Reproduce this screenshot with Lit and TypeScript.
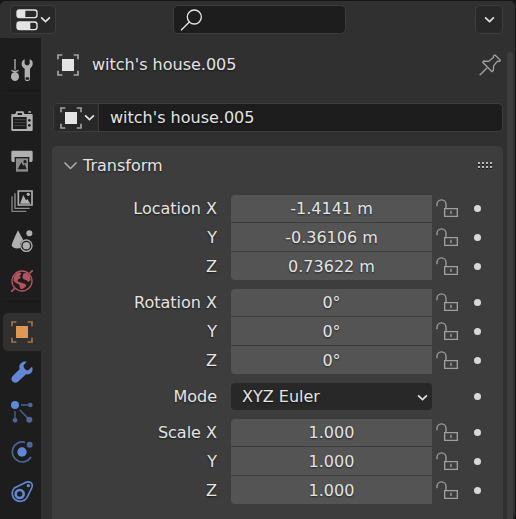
import { LitElement, html, svg, css, nothing } from "lit";
import { customElement } from "lit/decorators.js";
import { classMap } from "lit/directives/class-map.js";

const brackets = svg`<path d="M3 16V3H16 M50 3H63V16 M63 50V63H50 M16 63H3V50" fill="none" stroke="currentColor" stroke-width="5" opacity=".65"/><path d="M15 15H51V51H15Z"/>`;

const wrench = svg`<path d="M63 17C69 30 59 42 45 40L21 62C15 67 8 66 4 61S1 49 5 45L26 24C21 9 35 0 47 2L38 13C36 21 45 30 52 28Z"/>`;

const icons = {
  object: brackets,
  tools: svg`<path d="M10 0H14V32H10Z M1 32Q12 38 23 32V36Q12 44 1 36Z M12 40C21 40 24 47 24 54S18 66 12 66S0 61 0 54S3 40 12 40Z"/><path fill-rule="evenodd" d="M41 1V14L45 19H52L56 14V1C63 3 66 9 65 15C65 22 60 26 57 29V59C57 63 53 66 49 66S41 63 41 59V29C35 26 32 21 32 15C32 8 35 3 41 1Z M49 55A4 4 0 1 0 49 62A4 4 0 1 0 49 55Z"/>`,
  render: svg`<path d="M52 4H60V8H52Z M1 13L13 12L16 4H37L40 12H62Q65 12 65 15V60Q65 63 62 63H4Q1 63 1 60Z"/><path class="ink" d="M20 9H33V15H20Z M6 21H47V57H6Z"/><circle class="ink" cx="55" cy="31" r="4"/><circle class="ink" cx="55" cy="46" r="4"/><path d="M10 29H43M10 38H43M10 47H43" stroke="currentColor" stroke-width="3" opacity=".3"/>`,
  output: svg`<path d="M5 2H61Q65 2 65 6V31Q65 36 60 36H55V21H11V36H6Q1 36 1 31V6Q1 2 5 2Z"/><path d="M15 25H51V65H15Z" opacity=".75"/><path class="ink" d="M20 58L31 37L37 47L41 43L47 58Z"/><circle class="ink" cx="42" cy="35" r="5"/>`,
  viewLayer: svg`<path d="M22 3H63V45H22Z" fill="none" stroke="currentColor" stroke-width="5"/><path d="M27 41L37 15L45 31L49 27L58 41Z"/><circle cx="52" cy="13" r="5"/><path d="M12 10V55H56" fill="none" stroke="currentColor" stroke-width="4" opacity=".8"/><path d="M3 19V64H46" fill="none" stroke="currentColor" stroke-width="4" opacity=".7"/>`,
  scene: svg`<path d="M21 1L37 31C28 35 25 44 28 54C15 58 3 53 2 46C2 42 16 10 21 1Z"/><circle cx="55" cy="10" r="9"/><circle cx="46" cy="47" r="17" fill="none" stroke="currentColor" stroke-width="4"/><circle cx="46" cy="47" r="11"/>`,
  world: svg`<circle cx="33" cy="33" r="30" fill="none" stroke="currentColor" stroke-width="4"/><path d="M0 66L11 55M55 11L66 0" stroke="currentColor" stroke-width="5"/><path d="M8 23Q14 9 27 7L31 12L25 18L30 23L22 28L19 34L27 37L43 42L46 48L34 58L27 55L25 44L14 38L8 33Z M38 10L48 9L57 19L59 31L52 35L45 30L38 28L34 21Z"/>`,
  modifiers: wrench,
  particles: svg`<g stroke="currentColor" stroke-width="4" opacity=".65"><path d="M30 12H52M12 30V52M26 26L50 51" fill="none"/></g><circle cx="12" cy="12" r="12"/><g opacity=".7"><circle cx="58" cy="12" r="7"/><circle cx="12" cy="58" r="7"/><circle cx="55" cy="56" r="9"/></g>`,
  physics: svg`<circle cx="33" cy="33" r="14"/><g opacity=".7"><path d="M42 4A30 30 0 1 0 60 48" fill="none" stroke="currentColor" stroke-width="5"/><circle cx="56" cy="11" r="9"/></g>`,
  constraints: svg`<path d="M10 21L45 4Q55 0 61 6Q66 12 62 21L48 50A24 24 0 1 1 10 21Z" fill="none" stroke="currentColor" stroke-width="5"/><circle cx="26" cy="39" r="12" fill="none" stroke="currentColor" stroke-width="8"/><circle cx="52" cy="14" r="5"/>`,
  toggles: svg`<path fill-rule="evenodd" d="M10 1H56Q65 1 65 10V19Q65 28 56 28H10Q1 28 1 19V10Q1 1 10 1Z M28 5V24H55Q61 24 61 18V11Q61 5 55 5Z"/><path fill-rule="evenodd" d="M10 37H56Q65 37 65 46V55Q65 64 56 64H10Q1 64 1 55V46Q1 37 10 37Z M43 41V60H55Q61 60 61 54V47Q61 41 55 41Z"/>`,
  search: svg`<g fill="none" stroke="currentColor" stroke-width="4"><circle cx="43" cy="24" r="21"/><path d="M28 39L3 64"/></g>`,
  pin: svg`<g fill="none" stroke="currentColor" stroke-width="4" stroke-linejoin="round"><path d="M2 64L24 42"/><path d="M48 3L64 19L61 23L56 21L44 35L43 49L39 53L11 25L15 21L29 22L44 10L43 6Z"/></g>`,
  lock: svg`<g fill="none" stroke="currentColor" stroke-width="4"><path d="M3 25V19A13 13 0 0 1 30 19V30"/><path d="M26 32H64V55H26Z M45 38V48"/></g>`,
};

type IconName = keyof typeof icons;

const icon = (name: IconName) =>
  html`<svg class="icon" viewBox="0 0 66 66" aria-hidden="true">${icons[name]}</svg>`;

const chevron = (cls = "") =>
  html`<svg class="chevron ${cls}" viewBox="0 0 10 10" aria-hidden="true"><path d="M1 3L5 7L9 3" /></svg>`;

interface Tab {
  icon: IconName;
  label: string;
  tone?: string;
}

const tabGroups: Tab[][] = [
  [{ icon: "tools", label: "Tool" }],
  [
    { icon: "render", label: "Render" },
    { icon: "output", label: "Output" },
    { icon: "viewLayer", label: "View Layer" },
    { icon: "scene", label: "Scene" },
    { icon: "world", label: "World", tone: "red" },
  ],
  [
    { icon: "object", label: "Object", tone: "orange" },
    { icon: "modifiers", label: "Modifiers", tone: "blue" },
    { icon: "particles", label: "Particles", tone: "blue" },
    { icon: "physics", label: "Physics", tone: "blue" },
    { icon: "constraints", label: "Constraints", tone: "blue" },
  ],
];

interface Field {
  id: string;
  label: string;
  value: string;
  select?: boolean;
}

const fieldGroups: Field[][] = [
  [
    { id: "loc-x", label: "Location X", value: "-1.4141 m" },
    { id: "loc-y", label: "Y", value: "-0.36106 m" },
    { id: "loc-z", label: "Z", value: "0.73622 m" },
  ],
  [
    { id: "rot-x", label: "Rotation X", value: "0°" },
    { id: "rot-y", label: "Y", value: "0°" },
    { id: "rot-z", label: "Z", value: "0°" },
  ],
  [{ id: "mode", label: "Mode", value: "XYZ Euler", select: true }],
  [
    { id: "scale-x", label: "Scale X", value: "1.000" },
    { id: "scale-y", label: "Y", value: "1.000" },
    { id: "scale-z", label: "Z", value: "1.000" },
  ],
];

@customElement("app-root")
export class AppRoot extends LitElement {
  static styles = css`
    :host {
      display: block;
      background: #161616;
      color: #e4e4e4;
      font: 16px/20px "DejaVu Sans", sans-serif;
    }
    * {
      box-sizing: border-box;
    }
    button,
    input,
    select {
      margin: 0;
      padding: 0;
      border: 0;
      background: none;
      color: inherit;
      font: inherit;
      text-shadow: inherit;
      outline: none;
    }
    .editor {
      display: flex;
      flex-direction: column;
      min-height: 100vh;
      border-top: 1px solid #161616;
      border-right: 1px solid #161616;
      border-radius: 6px;
      background: #303030;
      text-shadow: 0 1px 2px rgba(0, 0, 0, 0.6);
    }
    .icon {
      display: block;
      flex: none;
      width: 22px;
      height: 22px;
      fill: currentColor;
    }
    .ink {
      fill: #1d1d1d;
    }
    .chevron {
      display: block;
      flex: none;
      width: 11px;
      height: 11px;
      fill: none;
      stroke: currentColor;
      stroke-width: 1.5;
    }
    .chevron.large {
      width: 15px;
      height: 15px;
      color: #b0b0b0;
      stroke-width: 1;
    }
    .header {
      display: flex;
      align-items: center;
      height: 37px;
      padding: 0 12px 0 10px;
    }
    .menu-button {
      display: flex;
      align-items: center;
      justify-content: center;
      gap: 2px;
      width: 28px;
      height: 29px;
      border: 1px solid #3d3d3d;
      border-radius: 5px;
      background: #282828;
    }
    .menu-button.wide {
      width: 46px;
    }
    .search {
      display: flex;
      flex: 0 1 173px;
      align-items: center;
      min-width: 0;
      height: 29px;
      margin: 0 auto 0 117px;
      padding: 0 6px;
      border: 1px solid #3d3d3d;
      border-radius: 5px;
      background: #1d1d1d;
    }
    .search input {
      flex: 1;
      width: 0;
      min-width: 0;
    }
    .body {
      display: flex;
      flex: 1;
    }
    .tabs {
      width: 41px;
      padding: 13px 0 0 3px;
      background: #1d1d1d;
    }
    .tab-group {
      display: flex;
      flex-direction: column;
      gap: 2px;
    }
    .tab-group + .tab-group {
      margin-top: 1px;
      padding-top: 11px;
      border-top: 1px solid #191919;
    }
    .tab {
      display: flex;
      align-items: center;
      justify-content: center;
      height: 38px;
      border-radius: 5px 0 0 5px;
      color: #b0b0b0;
    }
    .tab.active {
      background: #303030;
    }
    .tab.red {
      color: #b4535d;
    }
    .tab.orange {
      color: #e09655;
    }
    .tab.blue {
      color: #6088d4;
    }
    .main {
      display: flex;
      flex: 1;
      flex-direction: column;
      min-width: 0;
      padding-left: 11px;
    }
    .crumbs {
      display: flex;
      align-items: center;
      gap: 13px;
      height: 53px;
      padding: 0 2px 0 5px;
    }
    .pin {
      margin-left: auto;
      color: #a0a0a0;
    }
    .id-block {
      display: flex;
      height: 29px;
      margin: 12px 0 14px 1px;
      border: 1px solid #3d3d3d;
      border-radius: 5px;
      background: #1d1d1d;
      overflow: hidden;
    }
    .id-type {
      display: flex;
      align-items: center;
      gap: 2px;
      width: 45px;
      padding-left: 6px;
      border-right: 1px solid #3d3d3d;
      background: #282828;
    }
    .id-name {
      flex: 1;
      min-width: 0;
      padding: 0 11px;
    }
    .panel {
      flex: 1;
      padding-bottom: 15px;
      border-radius: 5px 5px 0 0;
      background: #3d3d3d;
    }
    .panel-header {
      display: flex;
      align-items: center;
      height: 39px;
      margin-bottom: 10px;
      padding: 0 11px;
    }
    .panel-toggle {
      display: flex;
      align-items: center;
      gap: 5px;
    }
    .grip {
      width: 14px;
      height: 7px;
      margin-left: auto;
      fill: #b8b8b8;
    }
    .grip .shade {
      fill: #161616;
    }
    .fields {
      display: flex;
      flex-direction: column;
      gap: 9px;
      padding-right: 11px;
    }
    .field-group {
      display: flex;
      flex-direction: column;
      gap: 2px;
    }
    .row {
      display: grid;
      grid-template-columns: minmax(0, 179fr) minmax(0, 201fr) 30px 30px;
      align-items: center;
      height: 27px;
    }
    .row label {
      padding-right: 14px;
      text-align: right;
    }
    .value {
      width: 100%;
      height: 27px;
      background: #545454;
      text-align: center;
    }
    .row:first-child .value {
      border-top-left-radius: 4px;
    }
    .row:last-child .value {
      border-bottom-left-radius: 4px;
    }
    .row + .row .value {
      box-shadow: 0 -1px 0 #545454;
    }
    .select {
      position: relative;
    }
    .select select {
      display: block;
      width: 100%;
      height: 27px;
      padding: 0 11px;
      border-radius: 4px;
      background: #282828;
      appearance: none;
    }
    .select .chevron {
      position: absolute;
      top: 9px;
      right: 4px;
      pointer-events: none;
    }
    .lock {
      justify-self: center;
      color: #a0a0a0;
    }
    .animate {
      grid-column: 4;
      justify-self: center;
      width: 7px;
      height: 7px;
      border-radius: 50%;
      background: #d8d8d8;
    }
    .scrollbar {
      flex: none;
      width: 12px;
      padding: 14px 2px 0 4px;
      display: flex;
    }
    .thumb {
      flex: 1;
      border-radius: 3px 3px 0 0;
      background: #3e3e3e;
    }
  `;

  private renderTab(tab: Tab) {
    const active = tab.label === "Object";
    return html`<button
      class=${classMap({ tab: true, active, [tab.tone ?? "plain"]: true })}
      role="tab"
      aria-selected=${active}
      aria-label=${tab.label}
    >
      ${icon(tab.icon)}
    </button>`;
  }

  private renderField(field: Field) {
    return html`<div class="row">
      <label for=${field.id}>${field.label}</label>
      ${field.select
        ? html`<div class="select">
            <select id=${field.id}>
              <option>${field.value}</option>
            </select>
            ${chevron()}
          </div>`
        : html`<input class="value" id=${field.id} .value=${field.value} />`}
      ${field.select
        ? nothing
        : html`<button class="lock" aria-label="Lock">${icon("lock")}</button>`}
      <button class="animate" aria-label="Animate property"></button>
    </div>`;
  }

  render() {
    return html`<div class="editor">
      <header class="header">
        <button class="menu-button wide" aria-label="Editor type">${icon("toggles")}${chevron()}</button>
        <label class="search">${icon("search")}<input type="text" aria-label="Search" /></label>
        <button class="menu-button" aria-label="Options">${chevron()}</button>
      </header>
      <div class="body">
        <nav class="tabs" role="tablist">
          ${tabGroups.map(
            (group) => html`<div class="tab-group">${group.map((tab) => this.renderTab(tab))}</div>`
          )}
        </nav>
        <main class="main">
          <div class="crumbs">
            ${icon("object")}<span>witch's house.005</span>
            <button class="pin" aria-label="Pin">${icon("pin")}</button>
          </div>
          <div class="id-block">
            <button class="id-type" aria-label="Browse objects">${icon("object")}${chevron()}</button>
            <input class="id-name" aria-label="Name" .value=${"witch's house.005"} />
          </div>
          <section class="panel">
            <div class="panel-header">
              <button class="panel-toggle" aria-expanded="true">${chevron("large")}Transform</button>
              <svg class="grip" viewBox="0 0 14 7" aria-hidden="true">
                ${[0, 4, 8, 12].map(
                  (x) => svg`<path d="M${x} 0h2v2h-2z M${x} 4h2v2h-2z"/><path class="shade" d="M${x} 2h2v1h-2z M${x} 6h2v1h-2z"/>`
                )}
              </svg>
            </div>
            <div class="fields">
              ${fieldGroups.map(
                (group) => html`<div class="field-group">${group.map((f) => this.renderField(f))}</div>`
              )}
            </div>
          </section>
        </main>
        <div class="scrollbar"><div class="thumb"></div></div>
      </div>
    </div>`;
  }
}
